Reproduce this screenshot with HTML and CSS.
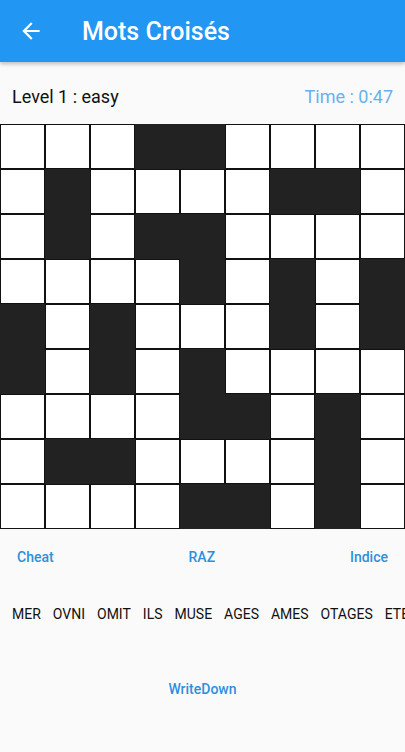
FILE: index.html
```html
<!DOCTYPE html>
<html lang="fr">
<head>
<meta charset="utf-8">
<title>Mots Croisés</title>
<link rel="stylesheet" href="styles.css">
</head>
<body>
<header class="appbar">
  <span class="back">
    <svg viewBox="0 0 24 24" width="26" height="26"><path fill="#fff" d="M20 11H7.83l5.59-5.59L12 4l-8 8 8 8 1.41-1.41L7.83 13H20v-2z"/></svg>
  </span>
  <h1 class="title">Mots Croisés</h1>
</header>
<div class="info">
  <span class="level">Level 1 : easy</span>
  <span class="time">Time : 0:47</span>
</div>
<div class="grid">
  <div class="c"></div><div class="c"></div><div class="c"></div><div class="c b"></div><div class="c b"></div><div class="c"></div><div class="c"></div><div class="c"></div><div class="c"></div>
  <div class="c"></div><div class="c b"></div><div class="c"></div><div class="c"></div><div class="c"></div><div class="c"></div><div class="c b"></div><div class="c b"></div><div class="c"></div>
  <div class="c"></div><div class="c b"></div><div class="c"></div><div class="c b"></div><div class="c b"></div><div class="c"></div><div class="c"></div><div class="c"></div><div class="c"></div>
  <div class="c"></div><div class="c"></div><div class="c"></div><div class="c"></div><div class="c b"></div><div class="c"></div><div class="c b"></div><div class="c"></div><div class="c b"></div>
  <div class="c b"></div><div class="c"></div><div class="c b"></div><div class="c"></div><div class="c"></div><div class="c"></div><div class="c b"></div><div class="c"></div><div class="c b"></div>
  <div class="c b"></div><div class="c"></div><div class="c b"></div><div class="c"></div><div class="c b"></div><div class="c"></div><div class="c"></div><div class="c"></div><div class="c"></div>
  <div class="c"></div><div class="c"></div><div class="c"></div><div class="c"></div><div class="c b"></div><div class="c b"></div><div class="c"></div><div class="c b"></div><div class="c"></div>
  <div class="c"></div><div class="c b"></div><div class="c b"></div><div class="c"></div><div class="c"></div><div class="c"></div><div class="c"></div><div class="c b"></div><div class="c"></div>
  <div class="c"></div><div class="c"></div><div class="c"></div><div class="c"></div><div class="c b"></div><div class="c b"></div><div class="c"></div><div class="c b"></div><div class="c"></div>
</div>
<div class="actions">
  <span class="btn">Cheat</span>
  <span class="btn">RAZ</span>
  <span class="btn">Indice</span>
</div>
<div class="words">
  <span class="w">MER</span><span class="w">OVNI</span><span class="w">OMIT</span><span class="w">ILS</span><span class="w">MUSE</span><span class="w">AGES</span><span class="w">AMES</span><span class="w">OTAGES</span><span class="w">ETE</span>
</div>
<div class="write">
  <span class="btn">WriteDown</span>
</div>
</body>
</html>
```
FILE: styles.css
```css
html, body {
  margin: 0;
  padding: 0;
}
body {
  background: #fafafa;
  font-family: Roboto, "Liberation Sans", sans-serif;
  width: 405px;
  height: 752px;
  overflow: hidden;
}
.appbar {
  height: 62px;
  background: #2196f3;
  display: flex;
  align-items: center;
  box-shadow: 0 2px 4px rgba(0,0,0,0.25);
  position: relative;
  z-index: 1;
}
.back {
  width: 26px;
  height: 26px;
  margin-left: 18px;
  display: flex;
}
.title {
  margin: 0 0 0 38px;
  color: #fff;
  font-size: 25px;
  font-weight: 500;
}
.info {
  height: 62px;
  display: flex;
  justify-content: space-between;
  align-items: center;
  padding: 6px 12px 0 12px;
  box-sizing: border-box;
  font-size: 18px;
}
.level {
  color: #111;
}
.time {
  color: #68b2ec;
}
.grid {
  display: grid;
  grid-template-columns: repeat(9, 45px);
  grid-template-rows: repeat(9, 45px);
  width: 405px;
}
.c {
  background: #fff;
  border: 1px solid #111;
}
.c.b {
  background: #222;
  border-color: #222;
}
.actions {
  display: flex;
  justify-content: space-between;
  padding: 20px 17px 0 17px;
  height: 56px;
  box-sizing: border-box;
}
.btn {
  color: #2e90dc;
  font-size: 14px;
  font-weight: 500;
}
.words {
  display: flex;
  white-space: nowrap;
  overflow: hidden;
  padding: 21px 0 0 6px;
  height: 96px;
  box-sizing: border-box;
  font-size: 14px;
  color: #111;
}
.w {
  padding: 0 6px;
  flex: none;
}
.write {
  display: flex;
  justify-content: center;
}
```
